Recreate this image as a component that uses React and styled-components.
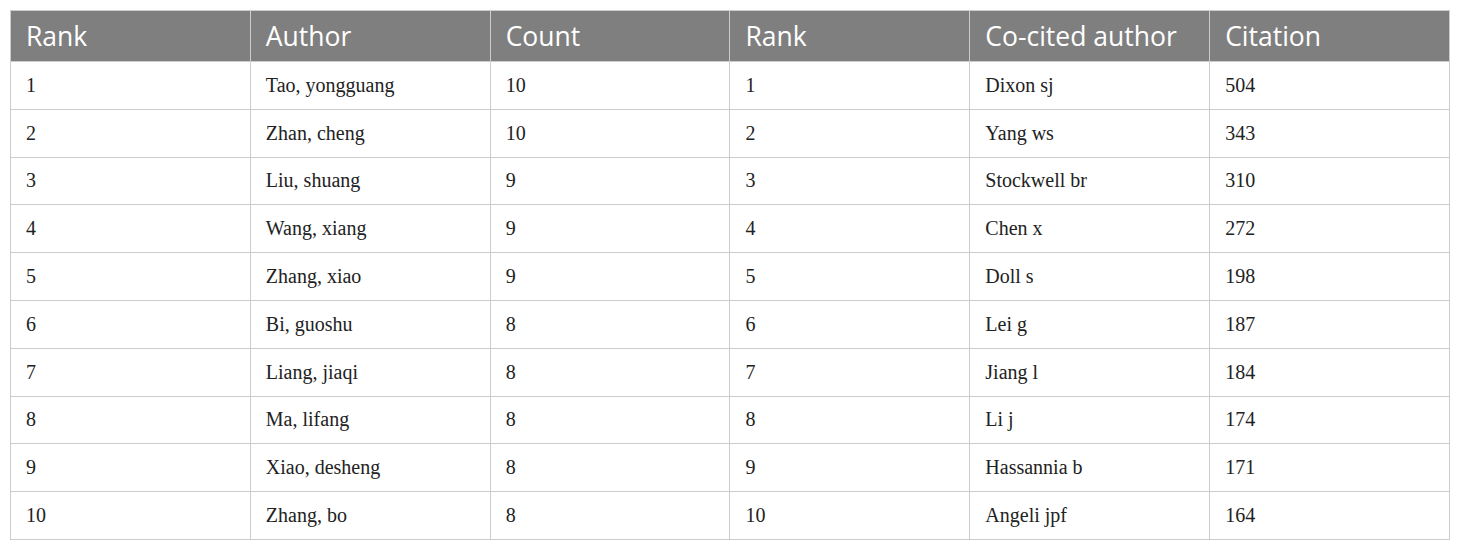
import styled, { createGlobalStyle } from 'styled-components';

const GlobalStyle = createGlobalStyle`
  body {
    margin: 0;
    background: #ffffff;
  }
`;

const Wrapper = styled.div`
  padding: 10px;
`;

const Table = styled.table`
  width: 1440px;
  border-collapse: collapse;
  table-layout: fixed;
  border: 1px solid #cccccc;
`;

const HeadCell = styled.th`
  height: 51px;
  padding: 0 0 0 15px;
  background-color: #7f7f7f;
  color: #ffffff;
  font-family: "Open Sans", "Noto Sans", sans-serif;
  font-size: 26.5px;
  font-weight: 400;
  text-align: left;
  border: 1px solid #cccccc;
  box-sizing: border-box;
`;

const Cell = styled.td`
  height: 46.8px;
  padding: 0 0 0 15px;
  color: #222222;
  font-family: "Liberation Serif", "DejaVu Serif", serif;
  font-size: 20px;
  text-align: left;
  border: 1px solid #cccccc;
`;

const headers = ['Rank', 'Author', 'Count', 'Rank', 'Co-cited author', 'Citation'];

const rows = [
  [1, 'Tao, yongguang', 10, 1, 'Dixon sj', 504],
  [2, 'Zhan, cheng', 10, 2, 'Yang ws', 343],
  [3, 'Liu, shuang', 9, 3, 'Stockwell br', 310],
  [4, 'Wang, xiang', 9, 4, 'Chen x', 272],
  [5, 'Zhang, xiao', 9, 5, 'Doll s', 198],
  [6, 'Bi, guoshu', 8, 6, 'Lei g', 187],
  [7, 'Liang, jiaqi', 8, 7, 'Jiang l', 184],
  [8, 'Ma, lifang', 8, 8, 'Li j', 174],
  [9, 'Xiao, desheng', 8, 9, 'Hassannia b', 171],
  [10, 'Zhang, bo', 8, 10, 'Angeli jpf', 164],
];

export default function App() {
  return (
    <Wrapper>
      <GlobalStyle />
      <Table>
        <thead>
          <tr>
            {headers.map((h, i) => (
              <HeadCell key={i}>{h}</HeadCell>
            ))}
          </tr>
        </thead>
        <tbody>
          {rows.map((r, i) => (
            <tr key={i}>
              {r.map((v, j) => (
                <Cell key={j}>{v}</Cell>
              ))}
            </tr>
          ))}
        </tbody>
      </Table>
    </Wrapper>
  );
}
